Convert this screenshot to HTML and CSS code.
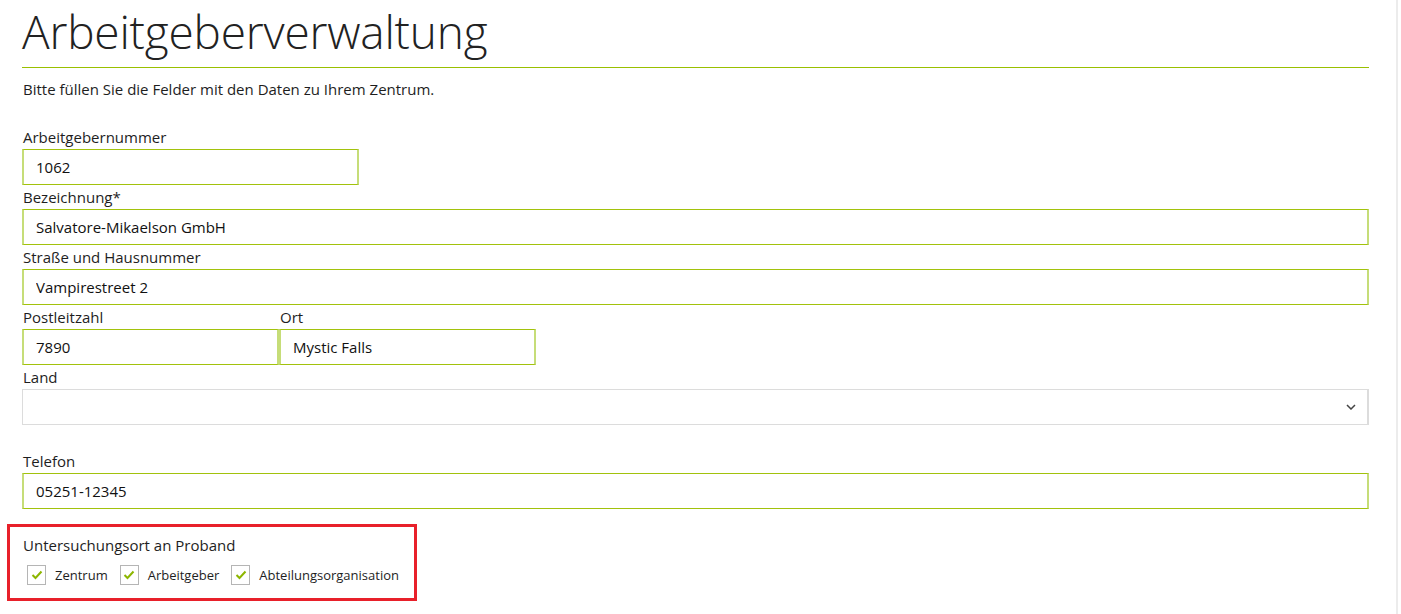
FILE: index.html
```html
<!DOCTYPE html>
<html lang="de">
<head>
<meta charset="utf-8">
<title>Arbeitgeberverwaltung</title>
<link rel="stylesheet" href="styles.css">
</head>
<body>
<div class="page">
  <div class="content">
    <h1 class="title">Arbeitgeberverwaltung</h1>
    <p class="intro">Bitte füllen Sie die Felder mit den Daten zu Ihrem Zentrum.</p>
    <form class="form">
      <div class="field w-short">
        <label class="label">Arbeitgebernummer</label>
        <input class="input" type="text" value="1062">
      </div>
      <div class="field">
        <label class="label">Bezeichnung*</label>
        <input class="input" type="text" value="Salvatore-Mikaelson GmbH">
      </div>
      <div class="field">
        <label class="label">Straße und Hausnummer</label>
        <input class="input" type="text" value="Vampirestreet 2">
      </div>
      <div class="row">
        <div class="field w-plz">
          <label class="label">Postleitzahl</label>
          <input class="input" type="text" value="7890">
        </div>
        <div class="field w-plz">
          <label class="label">Ort</label>
          <input class="input" type="text" value="Mystic Falls">
        </div>
      </div>
      <div class="field field-land">
        <label class="label">Land</label>
        <div class="select">
          <svg class="chev" width="10" height="6" viewBox="0 0 10 6"><path d="M1 1 L5 5 L9 1" fill="none" stroke="#444" stroke-width="1.5"/></svg>
        </div>
      </div>
      <div class="field">
        <label class="label">Telefon</label>
        <input class="input" type="text" value="05251-12345">
      </div>
      <div class="ort-box">
        <div class="label">Untersuchungsort an Proband</div>
        <div class="checks">
          <label class="check"><span class="box"><svg width="12" height="10" viewBox="0 0 12 10"><path d="M1.5 5 L4.5 8 L10.5 1.5" fill="none" stroke="#8db600" stroke-width="2"/></svg></span>Zentrum</label>
          <label class="check"><span class="box"><svg width="12" height="10" viewBox="0 0 12 10"><path d="M1.5 5 L4.5 8 L10.5 1.5" fill="none" stroke="#8db600" stroke-width="2"/></svg></span>Arbeitgeber</label>
          <label class="check"><span class="box"><svg width="12" height="10" viewBox="0 0 12 10"><path d="M1.5 5 L4.5 8 L10.5 1.5" fill="none" stroke="#8db600" stroke-width="2"/></svg></span>Abteilungsorganisation</label>
        </div>
      </div>
    </form>
  </div>
</div>
</body>
</html>
```
FILE: styles.css
```css
html, body {
  margin: 0;
  padding: 0;
  background: #fff;
}
body {
  font-family: "Open Sans", "Noto Sans", sans-serif;
  color: #1e1e1e;
  overflow: hidden;
}
.page {
  width: 1396px;
  height: 614px;
  border-right: 2px solid #ececec;
  box-sizing: content-box;
}
.content {
  padding-left: 22px;
  width: 1347px;
}
.title {
  margin: 0;
  font-weight: 300;
  font-size: 46px;
  line-height: 62px;
  letter-spacing: -0.2px;
  color: #222;
  padding-bottom: 5px;
  border-bottom: 1px solid #99c000;
}
.intro {
  margin: 10px 0 0 1px;
  font-size: 15px;
  line-height: 22px;
}
.form {
  margin-top: 25px;
  display: flex;
  flex-direction: column;
}
.field {
  display: flex;
  flex-direction: column;
}
.label {
  display: block;
  font-size: 15px;
  line-height: 24px;
  height: 24px;
  padding-left: 1px;
}
.input {
  box-sizing: border-box;
  height: 36px;
  margin: 0;
  border-top: 1px solid #a2c20c;
  border-bottom: 1px solid #a2c20c;
  border-left: 2px solid #c6dd78;
  border-right: 2px solid #c6dd78;
  padding: 0 0 0 12px;
  font-family: inherit;
  font-size: 15px;
  color: #111;
  outline: none;
  background: #fff;
}
.w-short { width: 337px; }
.row {
  display: flex;
}
.w-plz { width: 257px; }
.field-land { margin-bottom: 24px; }
.select {
  box-sizing: border-box;
  height: 36px;
  border: 1px solid #dcdcdc;
  border-right-width: 2px;
  display: flex;
  align-items: center;
  justify-content: flex-end;
  padding-right: 11px;
}
.chev { display: block; }
.ort-box {
  margin-top: 15px;
  margin-left: -15px;
  width: 410px;
  box-sizing: border-box;
  border: 3px solid #e8202a;
  padding: 6px 0 13px 12px;
}
.checks {
  display: flex;
  gap: 12px;
  padding-left: 5px;
  margin-top: 8px;
}
.check {
  display: flex;
  align-items: center;
  gap: 9px;
  font-size: 13px;
  line-height: 20px;
}
.box {
  box-sizing: border-box;
  width: 19px;
  height: 20px;
  border: 1px solid #b5b5b5;
  display: flex;
  align-items: center;
  justify-content: center;
  background: #fff;
}
.box svg { display: block; }
```
